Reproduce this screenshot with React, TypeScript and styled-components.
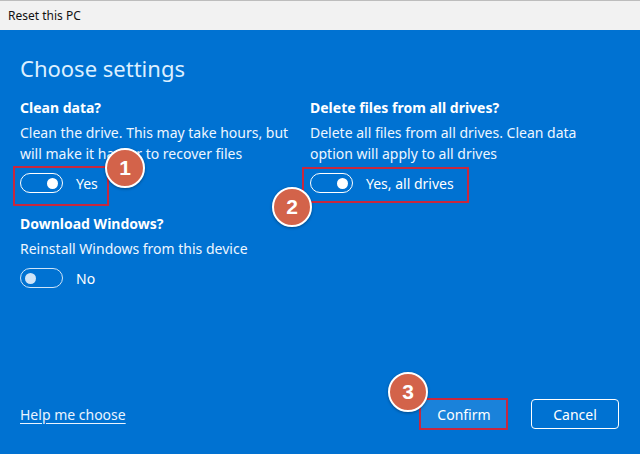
import React from 'react'
import styled, { createGlobalStyle } from 'styled-components'

const GlobalStyle = createGlobalStyle`
  html, body {
    margin: 0;
    padding: 0;
  }
  body {
    font-family: "Noto Sans", "Open Sans", Arial, sans-serif;
  }
`

const Window = styled.div`
  width: 640px;
  height: 454px;
  display: flex;
  flex-direction: column;
  overflow: hidden;
`

const TitleBar = styled.div`
  height: 29px;
  border-top: 1px solid #bdbdbd;
  background: #f2f2f2;
  display: flex;
  align-items: center;
  padding-left: 8px;
  font-size: 12px;
  color: #111;
`

const Panel = styled.div`
  flex: 1;
  background: #0072d2;
  color: #fff;
  display: flex;
  flex-direction: column;
  padding: 23px 21px 25px 20px;
`

const Title = styled.h1`
  margin: 0 0 15px;
  font-size: 22px;
  line-height: 30px;
  font-weight: 400;
  color: #dcefff;
`

const Columns = styled.div`
  display: grid;
  grid-template-columns: 290px 1fr;
`

const Section = styled.div<{ $gap?: number }>`
  display: flex;
  flex-direction: column;
  margin-top: ${({ $gap }) => $gap ?? 0}px;
`

const Heading = styled.div`
  font-size: 14px;
  line-height: 20px;
  font-weight: 700;
`

const Desc = styled.div`
  font-size: 14px;
  line-height: 21px;
  margin-top: 4px;
  color: #eef6ff;
  white-space: nowrap;
`

const ToggleRow = styled.div`
  position: relative;
  display: flex;
  align-items: center;
  gap: 13px;
  height: 20px;
  margin-top: 9px;
  font-size: 14px;
`

const Track = styled.span<{ $on: boolean }>`
  box-sizing: border-box;
  width: 43px;
  height: 20px;
  border-radius: 10px;
  border: 1.5px solid ${({ $on }) => ($on ? '#ffffff' : '#cfe4f8')};
  display: flex;
  align-items: center;
  justify-content: ${({ $on }) => ($on ? 'flex-end' : 'flex-start')};
  padding: 0 4px;
`

const Knob = styled.span<{ $on: boolean }>`
  width: 11px;
  height: 11px;
  border-radius: 50%;
  background: ${({ $on }) => ($on ? '#ffffff' : '#cfe4f8')};
`

const Mark = styled.span<{ $l: number; $t: number; $w: number; $h: number }>`
  position: absolute;
  box-sizing: border-box;
  left: ${({ $l }) => $l}px;
  top: ${({ $t }) => $t}px;
  width: ${({ $w }) => $w}px;
  height: ${({ $h }) => $h}px;
  border: 2px solid #c7283f;
  pointer-events: none;
`

const Badge = styled.span<{ $x: number; $y: number }>`
  position: absolute;
  box-sizing: border-box;
  left: ${({ $x }) => $x}px;
  top: ${({ $y }) => $y}px;
  width: 40px;
  height: 40px;
  border-radius: 50%;
  background: #d3634a;
  border: 2.5px solid #fff;
  box-shadow: 0 1px 3px rgba(0, 0, 0, 0.35);
  color: #fff;
  font-family: "Liberation Sans", Arial, sans-serif;
  font-size: 21px;
  font-weight: 700;
  display: flex;
  align-items: center;
  justify-content: center;
  z-index: 2;
`

const Footer = styled.div`
  margin-top: auto;
  display: flex;
  align-items: center;
`

const HelpLink = styled.a`
  font-size: 14px;
  color: #eaf4ff;
  text-decoration: underline;
  text-underline-offset: 3px;
  margin-right: auto;
`

const Button = styled.button<{ $primary?: boolean }>`
  position: relative;
  box-sizing: border-box;
  width: 88px;
  height: 30px;
  border-radius: 4px;
  font-family: inherit;
  font-size: 14px;
  color: #fff;
  background: ${({ $primary }) => ($primary ? '#1a82da' : 'transparent')};
  border: ${({ $primary }) => ($primary ? '1px solid #1a82da' : '1.5px solid #fff')};
  padding: 0;
  & + & {
    margin-left: 23px;
  }
`

const Toggle = ({ on, label }: { on: boolean; label: string }) => (
  <>
    <Track $on={on}>
      <Knob $on={on} />
    </Track>
    <span>{label}</span>
  </>
)

export default function App() {
  return (
    <>
      <GlobalStyle />
      <Window>
        <TitleBar>Reset this PC</TitleBar>
        <Panel>
          <Title>Choose settings</Title>
          <Columns>
            <div>
              <Section>
                <Heading>Clean data?</Heading>
                <Desc>
                  Clean the drive. This may take hours, but
                  <br />
                  will make it harder to recover files
                </Desc>
                <ToggleRow>
                  <Toggle on label="Yes" />
                  <Mark $l={-7} $t={-7} $w={96} $h={40} />
                  <Badge $x={85} $y={-25}>1</Badge>
                </ToggleRow>
              </Section>
              <Section $gap={21}>
                <Heading>Download Windows?</Heading>
                <Desc>Reinstall Windows from this device</Desc>
                <ToggleRow>
                  <Toggle on={false} label="No" />
                </ToggleRow>
              </Section>
            </div>
            <Section>
              <Heading>Delete files from all drives?</Heading>
              <Desc>
                Delete all files from all drives. Clean data
                <br />
                option will apply to all drives
              </Desc>
              <ToggleRow>
                <Toggle on label="Yes, all drives" />
                <Mark $l={-8} $t={-6} $w={167} $h={36} />
                <Badge $x={-38} $y={14}>2</Badge>
              </ToggleRow>
            </Section>
          </Columns>
          <Footer>
            <HelpLink>Help me choose</HelpLink>
            <Button $primary>
              Confirm
              <Mark $l={-2} $t={-2} $w={89} $h={32} />
              <Badge $x={-33} $y={-28}>3</Badge>
            </Button>
            <Button>Cancel</Button>
          </Footer>
        </Panel>
      </Window>
    </>
  )
}
